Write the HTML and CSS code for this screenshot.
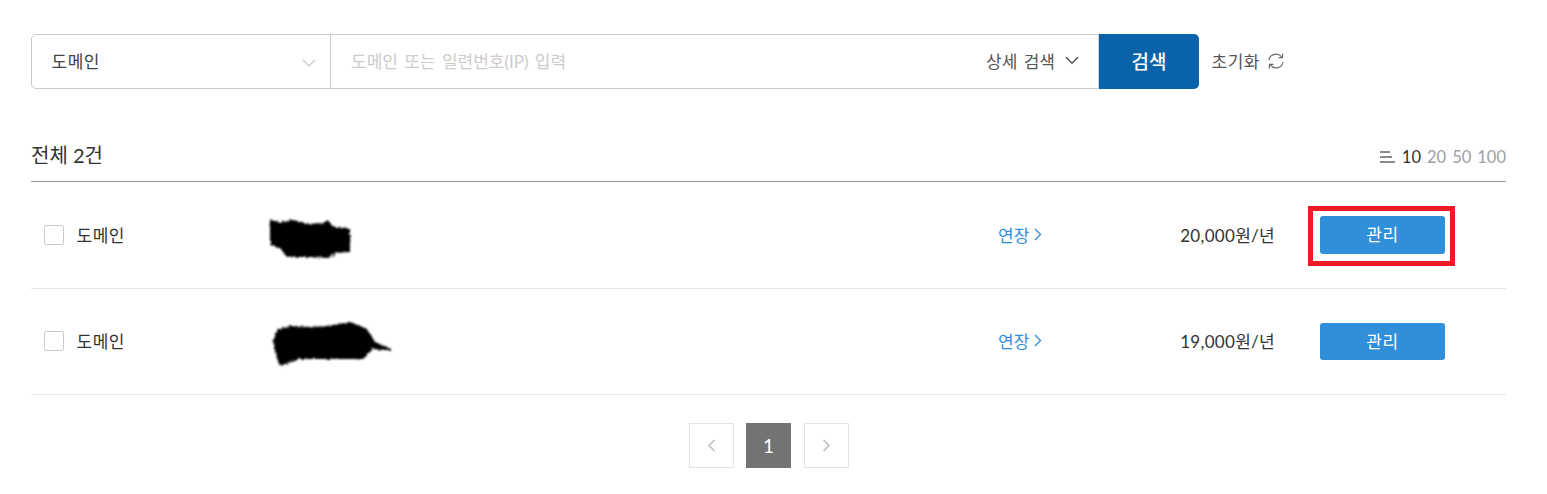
FILE: index.html
```html
<!DOCTYPE html>
<html lang="ko">
<head>
<meta charset="utf-8">
<title>도메인 관리</title>
<link rel="stylesheet" href="styles.css">
</head>
<body>
<svg class="defs" width="0" height="0"><defs><filter id="rough" x="-10%" y="-20%" width="120%" height="140%"><feTurbulence type="fractalNoise" baseFrequency="0.35" numOctaves="2" seed="4"/><feDisplacementMap in="SourceGraphic" scale="4"/><feGaussianBlur stdDeviation="1.100"/></filter></defs></svg>
<main class="page">
  <form class="search">
    <div class="search-box">
      <div class="select">
        <span class="ko">도메인</span>
        <svg class="select-arrow" width="14" height="8" viewBox="0 0 14 8"><path d="M1 1l6 6 6-6" fill="none" stroke="#c4c8cc" stroke-width="1.200"/></svg>
      </div>
      <div class="query">
        <span class="placeholder">도메인 또는 일련번호(IP) 입력</span>
        <span class="detail"><span class="detail-text">상세 검색</span>
          <svg width="14" height="9" viewBox="0 0 14 9"><path d="M1 1.200l6 6 6-6" fill="none" stroke="#555" stroke-width="1.500"/></svg>
        </span>
      </div>
    </div>
    <button class="search-btn" type="button">검색</button>
    <span class="reset"><span class="ko">초기화</span>
      <svg width="18" height="18" viewBox="0 0 18 18" fill="none" stroke="#666" stroke-width="1.100"><path d="M2 8a7 6.500 0 0 1 12.600-3.200M16 10a7 6.500 0 0 1-12.600 3.200"/><path d="M15.600 1.600v4h-4M2.400 16.400v-4h4"/></svg>
    </span>
  </form>

  <div class="list-head">
    <h2 class="total">전체 2건</h2>
    <div class="sizes">
      <svg width="16" height="12" viewBox="0 0 16 12" fill="#8a8a8a"><rect x="0" y="0" width="10" height="2"/><rect x="0" y="5" width="12" height="2"/><rect x="0" y="10" width="15" height="2"/></svg>
      <b>10</b><span>20</span><span>50</span><span>100</span>
    </div>
  </div>

  <div class="row">
    <span class="check"></span>
    <span class="kind ko">도메인</span>
    <span class="name">
      <svg class="scribble" width="120" height="50" viewBox="0 0 120 50"><path filter="url(#rough)" d="M0 10l10 2 13-2 14 4 16-1 5-3 5 7 17 1v24l-15 1-5 5-20-1-23 0-7-9-10-3z"/></svg>
    </span>
    <a class="renew">연장 <svg width="8" height="13" viewBox="0 0 8 13"><path d="M1 1l5.500 5.500L1 12" fill="none" stroke="#2f8fd8" stroke-width="1.400"/></svg></a>
    <span class="price">20,000원/년</span>
    <span class="manage-wrap"><button class="manage" type="button">관리</button><span class="mark"></span></span>
  </div>

  <div class="row">
    <span class="check"></span>
    <span class="kind ko">도메인</span>
    <span class="name">
      <svg class="scribble" width="120" height="50" viewBox="0 0 120 50"><path filter="url(#rough)" d="M3 25l5-12 12-3 20 1 17-1 23-4 17 7 8 13 15 6v3l-17-2-10 10-36 0-27 0-20 7-3-7z"/></svg>
    </span>
    <a class="renew">연장 <svg width="8" height="13" viewBox="0 0 8 13"><path d="M1 1l5.500 5.500L1 12" fill="none" stroke="#2f8fd8" stroke-width="1.400"/></svg></a>
    <span class="price">19,000원/년</span>
    <span class="manage-wrap"><button class="manage" type="button">관리</button></span>
  </div>

  <nav class="pager">
    <a class="page-btn"><svg width="9" height="13" viewBox="0 0 9 13"><path d="M7.500 1L2 6.500 7.500 12" fill="none" stroke="#b9bec4" stroke-width="1.500"/></svg></a>
    <a class="page-btn current">1</a>
    <a class="page-btn"><svg width="9" height="13" viewBox="0 0 9 13"><path d="M1.500 1L7 6.500 1.500 12" fill="none" stroke="#b9bec4" stroke-width="1.500"/></svg></a>
  </nav>
</main>
</body>
</html>
```

FILE: styles.css
```css
* { box-sizing: border-box; }
html, body { margin: 0; background: #fff; }
body {
  font-family: Lato, "Noto Sans CJK KR", sans-serif;
  font-size: 17px;
  color: #333;
}
.defs { position: absolute; }
.ko { letter-spacing: 0.500px; }
.page { padding: 34px 41px 0 31px; }

.search { display: flex; align-items: stretch; height: 55px; }
.search-box {
  display: flex;
  width: 1068px;
  border: 1px solid #ccc;
  border-radius: 5px 0 0 5px;
}
.select {
  width: 299px;
  flex: none;
  display: flex;
  align-items: center;
  justify-content: space-between;
  padding: 0 14px 3px 19.500px;
  border-right: 1px solid #ccc;
  color: #444;
}
.select-arrow { margin-top: 6px; }
.query {
  flex: 1;
  display: flex;
  align-items: center;
  justify-content: space-between;
  padding: 0 19px 3px 20px;
}
.placeholder { color: #ccc; word-spacing: 2px; }
.detail { color: #555; display: flex; align-items: center; gap: 10px; }
.detail-text { word-spacing: 2px; }
.search-btn {
  width: 100px;
  flex: none;
  border: 0;
  border-radius: 0 5px 5px 0;
  padding-bottom: 3px;
  background: #0a62a8;
  color: #fff;
  font: 500 19px Lato, "Noto Sans CJK KR", sans-serif;
}
.reset {
  display: flex;
  align-items: center;
  gap: 7px;
  margin-left: 12.500px;
  padding-bottom: 2px;
  color: #555;
}

.list-head {
  display: flex;
  justify-content: space-between;
  align-items: center;
  height: 93px;
  padding-top: 42px;
  border-bottom: 1px solid #999;
}
.total { margin: 0; font-size: 20px; font-weight: 400; color: #333; position: relative; top: -2px; }
.sizes { display: flex; align-items: center; gap: 6px; color: #a0a0a0; font-size: 16.500px; margin-top: 2px; }
.sizes b { font-weight: 400; color: #333; }

.row {
  display: flex;
  align-items: center;
  height: 106.500px;
  padding-left: 13px;
  border-bottom: 1px solid #e6e6e6;
}
.check {
  width: 20px;
  height: 20px;
  flex: none;
  border: 1px solid #ccc;
  border-radius: 2px;
  margin-right: 12.500px;
}
.kind { width: 193.500px; flex: none; color: #333; padding-bottom: 1px; }
.name { flex: 1; display: flex; align-items: center; }
.scribble { display: block; overflow: visible; }
.renew {
  width: 100px;
  flex: none;
  color: #2f8fd8;
  display: flex;
  align-items: center;
  gap: 5px;
  padding-bottom: 1px;
}
.price { width: 177px; flex: none; text-align: right; color: #333; margin-right: 45px; letter-spacing: 0.300px; padding-bottom: 1px; }
.manage-wrap { position: relative; flex: none; margin-right: 61px; display: flex; }
.manage {
  width: 125px;
  height: 37.500px;
  border: 0;
  border-radius: 3px;
  padding-bottom: 3px;
  background: #308fd8;
  color: #fff;
  font: 400 17px Lato, "Noto Sans CJK KR", sans-serif;
  letter-spacing: 0.500px;
}
.mark {
  position: absolute;
  left: -12px;
  top: -10.500px;
  width: 147px;
  height: 60px;
  border: 5px solid #ed1c24;
}

.pager { display: flex; justify-content: center; gap: 12.500px; margin-top: 28px; }
.page-btn {
  width: 45px;
  height: 45px;
  display: flex;
  align-items: center;
  justify-content: center;
  border: 1px solid #e3e3e3;
  background: #fff;
}
.page-btn.current { background: #737373; border-color: #737373; color: #fff; font-size: 19px; }
```
